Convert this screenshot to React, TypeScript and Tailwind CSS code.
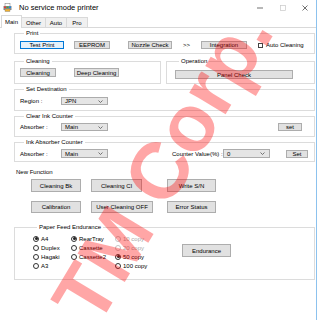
import type { ReactNode } from 'react';

function Btn({ children, className = '', focused = false }: { children: ReactNode; className?: string; focused?: boolean }) {
  return (
    <div
      className={`flex items-center justify-center border text-[6px] leading-[6px] whitespace-nowrap ${
        focused ? 'border-[#0078d7] bg-[#e5f1fb]' : 'border-[#adadad] bg-[#e1e1e1]'
      } ${className}`}
    >
      {children}
    </div>
  );
}

function Select({ value, className = '' }: { value: string; className?: string }) {
  return (
    <div className={`flex items-center justify-between border border-[#acacac] bg-[#e5e5e5] pl-[3px] pr-[4px] ${className}`}>
      <span>{value}</span>
      <svg width="5" height="3" viewBox="0 0 5 3">
        <path d="M0.5 0.5 L2.5 2.5 L4.5 0.5" fill="none" stroke="#555" strokeWidth="0.8" />
      </svg>
    </div>
  );
}

function Group({ title, children, className = '' }: { title: string; children: ReactNode; className?: string }) {
  return (
    <fieldset className={`border border-[#dcdcdc] ${className}`}>
      <legend className="ml-[4px] px-[2px] text-[6px] leading-[6px]">{title}</legend>
      {children}
    </fieldset>
  );
}

function Radio({ label, checked = false, disabled = false }: { label: string; checked?: boolean; disabled?: boolean }) {
  return (
    <div className="flex h-[9px] items-center">
      <span
        className={`flex h-[6px] w-[6px] items-center justify-center rounded-full border bg-white ${
          disabled ? 'border-[#c4c4c4]' : 'border-[#333]'
        }`}
      >
        {checked && <span className="h-[3px] w-[3px] rounded-full bg-[#222]" />}
      </span>
      <span className={`ml-[2px] ${disabled ? 'text-[#a8a8a8]' : ''}`}>{label}</span>
    </div>
  );
}

function PrinterIcon() {
  return (
    <svg width="9" height="9" viewBox="0 0 9 9">
      <rect x="2" y="0.5" width="5" height="3" fill="#fff" stroke="#777" strokeWidth="0.5" />
      <rect x="0.5" y="3" width="8" height="4" fill="#8a8a8a" />
      <rect x="1" y="3.5" width="2" height="1.5" fill="#e53935" />
      <rect x="3.5" y="3.5" width="2" height="1.5" fill="#43a047" />
      <rect x="6" y="3.5" width="2" height="1.5" fill="#1e88e5" />
      <rect x="2" y="6" width="5" height="2.5" fill="#f0b030" stroke="#777" strokeWidth="0.4" />
    </svg>
  );
}

export default function App() {
  const tabs = ['Other', 'Auto', 'Pro'];
  const tabWidths = ['w-[24px]', 'w-[21px]', 'w-[21px]'];

  return (
    <div className="relative h-[320px] w-[320px] overflow-hidden bg-white font-['Liberation_Sans',Arial,sans-serif] text-[6px] leading-[6px] text-black">
      <div className="flex h-full w-[317px] flex-col border-r border-[#8cc2ee]">
        {/* title bar */}
        <div className="flex h-[15px] shrink-0 items-center">
          <div className="ml-[3px] flex">
            <PrinterIcon />
          </div>
          <span className="ml-[7px] text-[7.5px] leading-[8px]">No service mode printer</span>
          <div className="ml-auto flex items-center">
            <svg width="6" height="6" viewBox="0 0 6 6" className="mr-[17px]">
              <line x1="0" y1="3" x2="6" y2="3" stroke="#333" strokeWidth="0.7" />
            </svg>
            <svg width="6" height="6" viewBox="0 0 6 6" className="mr-[16px]">
              <rect x="0.5" y="0.5" width="5" height="5" fill="none" stroke="#c8c8c8" strokeWidth="0.7" />
            </svg>
            <svg width="6" height="6" viewBox="0 0 6 6" className="mr-[8px]">
              <path d="M0.5 0.5 L5.5 5.5 M5.5 0.5 L0.5 5.5" stroke="#333" strokeWidth="0.7" />
            </svg>
          </div>
        </div>

        {/* tabs */}
        <div className="flex h-[13px] shrink-0 items-end border-b border-[#d9d9d9] pl-[1px]">
          <div className="-mb-[1px] flex h-[13px] w-[21px] items-center justify-center border border-b-0 border-[#d9d9d9] bg-white">
            Main
          </div>
          {tabs.map((t, i) => (
            <div
              key={t}
              className={`flex h-[10px] ${tabWidths[i]} items-center justify-center border border-b-0 border-l-0 border-[#d9d9d9] bg-[#f0f0f0]`}
            >
              {t}
            </div>
          ))}
        </div>

        {/* tab page */}
        <div className="flex flex-1 flex-col pl-[14px] pr-[1px]">
          <Group title="Print" className="mt-[2px] pt-[5px] pb-[4px] pl-[5px]">
            <div className="flex items-center">
              <Btn focused className="h-[8px] w-[44px]">Test Print</Btn>
              <Btn className="ml-[10px] h-[8px] w-[36px]">EEPROM</Btn>
              <Btn className="ml-[18px] h-[8px] w-[44px]">Nozzle Check</Btn>
              <span className="ml-[11px] w-[6px]">&gt;&gt;</span>
              <Btn className="ml-[12px] h-[8px] w-[46px]">Integration</Btn>
              <span className="ml-[11px] h-[5px] w-[5px] border border-[#444] bg-white" />
              <span className="ml-[3px]">Auto Cleaning</span>
            </div>
          </Group>

          <div className="mt-[4px] flex gap-[5px]">
            <Group title="Cleaning" className="w-[147px] pt-[4px] pb-[6px] pl-[5px]">
              <div className="flex">
                <Btn className="h-[9px] w-[36px]">Cleaning</Btn>
                <Btn className="ml-[18px] h-[9px] w-[45px]">Deep Cleaning</Btn>
              </div>
            </Group>
            <Group title="Operation" className="flex-1 pt-[6px] pb-[4px] pl-[8px]">
              <Btn className="h-[9px] w-[118px]">Panel Check</Btn>
            </Group>
          </div>

          <Group title="Set Destination" className="mt-[2px] pt-[5px] pb-[5px] pl-[5px]">
            <div className="flex items-center">
              <span className="w-[41px]">Region :</span>
              <Select value="JPN" className="h-[8px] w-[47px]" />
            </div>
          </Group>

          <Group title="Clear Ink Counter" className="mt-[2px] pt-[4px] pb-[5px] pl-[5px] pr-[12px]">
            <div className="flex items-center">
              <span className="w-[41px]">Absorber :</span>
              <Select value="Main" className="h-[8px] w-[47px]" />
              <Btn className="ml-auto h-[8px] w-[24px]">set</Btn>
            </div>
          </Group>

          <Group title="Ink Absorber Counter" className="mt-[2px] pt-[4px] pb-[3px] pl-[5px]">
            <div className="flex items-center">
              <span className="w-[41px]">Absorber :</span>
              <Select value="Main" className="h-[9px] w-[47px]" />
              <span className="ml-[64px] w-[51px]">Counter Value(%) :</span>
              <Select value="0" className="h-[9px] w-[47px]" />
              <Btn className="ml-[16px] h-[8px] w-[22px]">Set</Btn>
            </div>
          </Group>

          <div className="ml-[2px] mt-[7px]">New Function</div>
          <div className="ml-[17px] mt-[4px] flex">
            <Btn className="h-[13px] w-[50px]">Cleaning Bk</Btn>
            <Btn className="ml-[10px] h-[13px] w-[51px]">Cleaning Cl</Btn>
            <Btn className="ml-[25px] h-[13px] w-[49px]">Write S/N</Btn>
          </div>
          <div className="ml-[17px] mt-[9px] flex">
            <Btn className="h-[12px] w-[50px]">Calibration</Btn>
            <Btn className="ml-[10px] h-[12px] w-[62px]">User Cleaning OFF</Btn>
            <Btn className="ml-[14px] h-[12px] w-[49px]">Error Status</Btn>
          </div>

          <Group title="Paper Feed Endurance" className="mt-[11px] pt-[4px] pb-[9px] pl-[18px]">
            <div className="flex items-start">
              <div className="flex w-[38px] flex-col">
                <Radio label="A4" checked />
                <Radio label="Duplex" />
                <Radio label="Hagaki" />
                <Radio label="A3" />
              </div>
              <div className="flex w-[44px] flex-col">
                <Radio label="RearTray" checked />
                <Radio label="Cassette" />
                <Radio label="Cassette2" />
              </div>
              <div className="flex w-[40px] flex-col">
                <Radio label="10 copy" disabled />
                <Radio label="20 copy" disabled />
                <Radio label="50 copy" checked />
                <Radio label="100 copy" />
              </div>
              <Btn className="ml-[27px] mt-[10px] h-[13px] w-[49px]">Endurance</Btn>
            </div>
          </Group>
        </div>
      </div>

      {/* watermark */}
      <div className="pointer-events-none absolute left-[163px] top-[166px] -translate-x-1/2 -translate-y-1/2 rotate-[-59deg] whitespace-nowrap text-[80px] font-bold leading-none text-[#ff0000]/35">
        TM Corp.
      </div>
    </div>
  );
}
